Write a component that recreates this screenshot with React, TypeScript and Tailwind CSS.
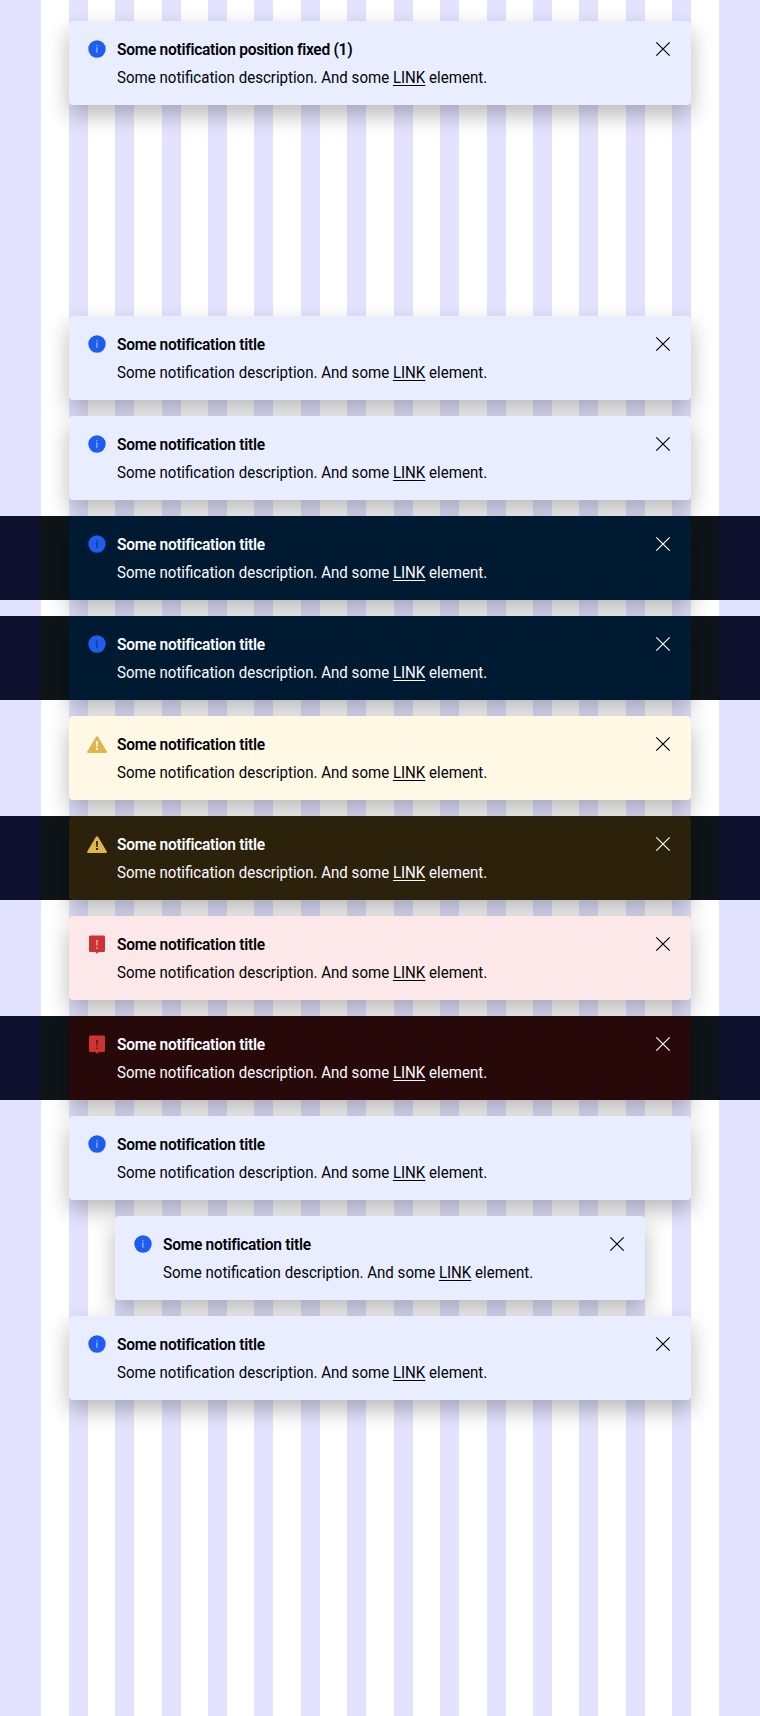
type Kind = 'info' | 'warning' | 'error';

interface NoteProps {
  title?: string;
  kind?: Kind;
  dark?: boolean;
  closable?: boolean;
}

const surfaces = {
  info: { light: 'bg-[#e8eeff]', dark: 'bg-[#001a31]' },
  warning: { light: 'bg-[#fff8e5]', dark: 'bg-[#2c210a]' },
  error: { light: 'bg-[#fce8e8]', dark: 'bg-[#27090a]' },
};

const marks = {
  info: { light: '#91adf8', dark: '#12357e' },
  warning: { light: '#fff8e5', dark: '#2c210a' },
  error: { light: '#eda8a8', dark: '#5b1919' },
};

function KindIcon({ kind, mark }: { kind: Kind; mark: string }) {
  return (
    <svg viewBox="0 0 24 24" className="h-6 w-6 shrink-0">
      {kind === 'info' && (
        <>
          <circle cx="12" cy="12" r="8.7" fill="#1f5def" />
          <path d="M11.2 10.200h1.400v5.600h-1.400zM11.200 8h1.400v1.300h-1.400z" fill={mark} />
        </>
      )}
      {kind === 'warning' && (
        <>
          <path
            d="M11 3.800c.45-.8 1.550-.8 2 0l8.800 14.800c.35.7 0 1.400-.9 1.400H3.100c-.9 0-1.250-.7-.9-1.400z"
            transform="translate(0 1)"
            fill="#deb64b"
          />
          <path d="M11 9h2l-.3 6h-1.400zM11 16h2v2h-2z" fill={mark} />
        </>
      )}
      {kind === 'error' && (
        <>
          <path
            d="M5.500 3.400h13A1.500 1.500 0 0 1 20 4.900v13.600a1.500 1.500 0 0 1-1.500 1.500h-4.700l-1.800 1.800-1.800-1.800H5.500A1.500 1.500 0 0 1 4 18.500V4.900a1.500 1.500 0 0 1 1.500-1.500z"
            fill="#cc3332"
          />
          <path d="M11.100 8h1.800l-.4 6h-1zM11.200 15.400h1.600v1.600h-1.600z" fill={mark} />
        </>
      )}
    </svg>
  );
}

function Note({ title = 'Some notification title', kind = 'info', dark = false, closable = true }: NoteProps) {
  const tone = dark ? 'dark' : 'light';
  return (
    <section
      className={`flex h-[84px] w-full items-start rounded-[4px] px-4 pt-4 font-['Roboto','Liberation_Sans',sans-serif] text-[16.5px] leading-6 shadow-[0_10px_22px_rgba(0,0,0,0.28)] ${surfaces[kind][tone]} ${dark ? 'text-[#fbfcff]' : 'text-[#010205]'}`}
    >
      <KindIcon kind={kind} mark={marks[kind][tone]} />
      <div className="mt-px ml-2 grow whitespace-nowrap">
        <h5 className="origin-left scale-x-[.942] font-semibold tracking-[-0.3px]">{title}</h5>
        <p className="mt-1 origin-left scale-x-[.913]">
          Some notification description. And some{' '}
          <a href="#" className="underline decoration-1 underline-offset-[1.5px]">LINK</a> element.
        </p>
      </div>
      {closable && (
        <button aria-label="Close" className="h-6 w-6 shrink-0">
          <svg viewBox="0 0 24 24" className="h-6 w-6" fill="none" stroke="currentColor" strokeWidth="1.200">
            <path d="M5.300 5.300l13.400 13.400M18.700 5.300L5.300 18.700" />
          </svg>
        </button>
      )}
    </section>
  );
}

function Row(props: NoteProps & { inset?: boolean }) {
  const { inset, ...note } = props;
  return (
    <div
      className={`h-[84px] ${inset ? 'px-[115px]' : 'px-[69px]'} ${
        props.dark
          ? 'bg-[linear-gradient(90deg,#0d112e_41px,#0e1418_41px,#0e1418_719px,#0d112e_719px)]'
          : ''
      }`}
    >
      <Note {...note} />
    </div>
  );
}

const gaps = [27, 28, 27, 27, 28, 27, 28, 27, 28, 27, 27, 28, 27, 0];

function GridOverlay() {
  return (
    <div aria-hidden="true" className="absolute inset-0 flex bg-white">
      <div className="mr-[28px] w-[41px] bg-[#e3e3ff]" />
      {gaps.map((gap, i) => (
        <div key={i} className="w-[19px] bg-[#e3e3ff]" style={{ marginRight: gap }} />
      ))}
      <div className="ml-[28px] w-[41px] bg-[#e3e3ff]" />
    </div>
  );
}

export default function App() {
  return (
    <div className="relative h-[1716px] w-[760px] overflow-hidden">
      <GridOverlay />
      <main className="relative pt-[21px]">
        <Row title="Some notification position fixed (1)" />
        <div className="mt-[211px] flex flex-col gap-4">
          <Row />
          <Row />
          <Row dark />
          <Row dark />
          <Row kind="warning" />
          <Row kind="warning" dark />
          <Row kind="error" />
          <Row kind="error" dark />
          <Row closable={false} />
          <Row inset />
          <Row />
        </div>
      </main>
    </div>
  );
}
